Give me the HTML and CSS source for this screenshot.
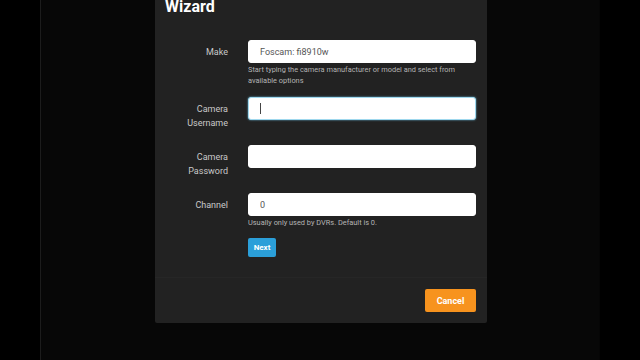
FILE: index.html
```html
<!DOCTYPE html>
<html lang="en">

<head>
    <meta charset="UTF-8">
    <meta name="viewport" content="width=device-width, initial-scale=1.0">
    <title>Camera Wizard</title>
    <link rel="stylesheet" href="styles.css">
</head>

<body>
    <div class="page">
        <div class="gutter"></div>
        <div class="main">
            <div class="modal">
                <h2 class="modal-title">Wizard</h2>

                <div class="modal-body">
                    <div class="form-row hinted">
                        <label class="label">Make</label>
                        <div class="field">
                            <input class="input" type="text" value="Foscam: fi8910w">
                            <p class="hint">Start typing the camera manufacturer or model and select from available options</p>
                        </div>
                    </div>

                    <div class="form-row">
                        <label class="label">Camera Username</label>
                        <div class="field">
                            <div class="input focused"><span class="caret"></span></div>
                        </div>
                    </div>

                    <div class="form-row">
                        <label class="label">Camera Password</label>
                        <div class="field">
                            <input class="input" type="password" value="">
                        </div>
                    </div>

                    <div class="form-row last">
                        <label class="label">Channel</label>
                        <div class="field">
                            <input class="input" type="text" value="0">
                            <p class="hint">Usually only used by DVRs. Default is 0.</p>
                            <button class="btn btn-next">Next</button>
                        </div>
                    </div>
                </div>

                <div class="modal-footer">
                    <button class="btn btn-cancel">Cancel</button>
                </div>
            </div>
        </div>
        <div class="gutter right"></div>
    </div>
</body>

</html>
```

FILE: styles.css
```css
body {
    margin: 0;
    background-color: #000;
    font-family: Roboto, "Liberation Sans", sans-serif;
}

.page {
    display: flex;
    height: 360px;
    overflow: hidden;
}

.gutter {
    width: 40px;
    background-color: #000;
    border-right: 1px solid #1c1c1c;
}

.gutter.right {
    border-right: none;
    border-left: 1px solid #050505;
}

.main {
    flex: 1;
    background-color: #070707;
    display: flex;
    justify-content: center;
    align-items: flex-start;
}

.modal {
    width: 332px;
    margin: -13px 0 0 2px;
    background-color: #222;
    border-radius: 2px;
}

.modal-title {
    margin: 0;
    padding: 10px 0 0 10px;
    font-size: 16px;
    line-height: 20px;
    font-weight: 700;
    color: #fff;
}

.modal-body {
    padding: 23px 11px 0 0;
}

.form-row {
    display: flex;
    margin-bottom: 25px;
}

.form-row.hinted {
    margin-bottom: 11px;
}

.form-row.last {
    margin-bottom: 20px;
}

.label {
    box-sizing: border-box;
    width: 73px;
    height: 23px;
    padding-top: 5px;
    text-align: right;
    font-size: 9px;
    line-height: 14px;
    color: #c9c9c9;
}

.field {
    margin-left: 20px;
    flex: 1;
}

.input {
    display: block;
    box-sizing: border-box;
    width: 100%;
    height: 23px;
    margin: 0;
    padding: 0 11px;
    border: 1px solid #fff;
    border-radius: 3px;
    background-color: #fff;
    font-family: inherit;
    font-size: 9px;
    color: #555;
    outline: none;
}

.input.focused {
    display: flex;
    align-items: center;
    border-color: #9fd8ee;
    box-shadow: 0 0 2px #6cc3e6;
}

.caret {
    width: 1px;
    height: 11px;
    background-color: #444;
}

.hint {
    margin: 1px 0 0 0;
    font-size: 7.4px;
    line-height: 11px;
    color: #b4b4b4;
}

.btn {
    border: none;
    border-radius: 2px;
    font-family: inherit;
    font-weight: 700;
    color: #fff;
    cursor: pointer;
}

.btn-next {
    display: block;
    margin-top: 10px;
    width: 28px;
    height: 19px;
    padding: 0;
    font-size: 8px;
    background-color: #2b9fd9;
}

.modal-footer {
    display: flex;
    justify-content: flex-end;
    padding: 11px 11px 11px 0;
    border-top: 1px solid #262626;
}

.btn-cancel {
    width: 51px;
    height: 23px;
    padding: 0;
    font-size: 9px;
    background-color: #f7931e;
}
```
